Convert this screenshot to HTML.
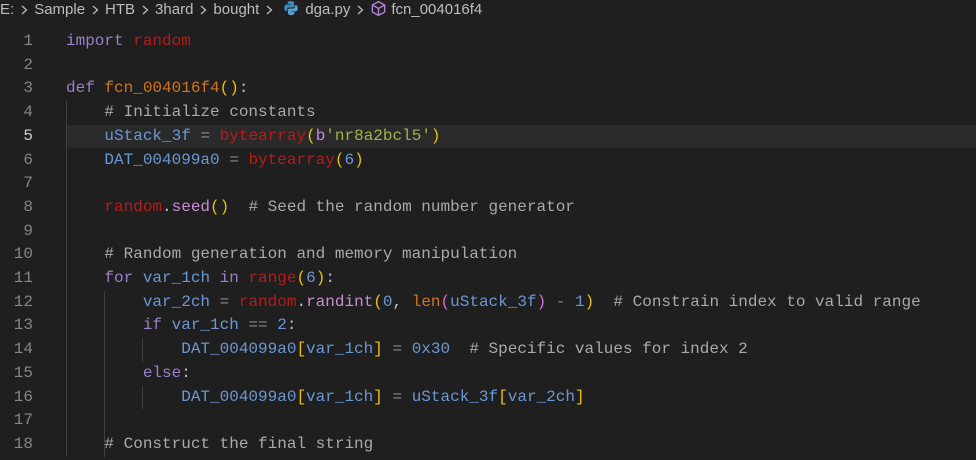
<!DOCTYPE html>
<html><head><meta charset="utf-8"><style>
html,body{margin:0;padding:0;background:#1f1f1f;width:976px;height:452px;overflow:hidden}
.bc{position:absolute;top:0;left:0;height:28px;line-height:30px;font:15px "Liberation Sans",sans-serif;color:#bdbdbd;white-space:nowrap}
.sep{display:inline-block;width:9px;height:10px;margin:0 5px 0 6px;vertical-align:-1px}
.code{position:absolute;top:30px;left:0;font:16px/23.7px "Liberation Mono",monospace;color:#c0c0c0;white-space:pre}
.ln{position:absolute;left:0;width:33px;text-align:right;color:#858585}
.ln.a{color:#cccccc}
.tx{position:absolute;left:66px}
.hl{position:absolute;left:66px;right:0;background:#2a2a2a}
.g{position:absolute;width:1px;background:#404040}
.k{color:#9b7fc8}.r{color:#b81b1b}.f{color:#d2741e}.c{color:#a9a9a9}.v{color:#6b98d4}.n{color:#6b98d4}.st{color:#9fb544}.o{color:#8a8a8a}.y{color:#e8c10a}.p{color:#d36ad6}.b{color:#c78bd6}
</style></head><body>
<div class="bc">E:<svg class="sep" viewBox="0 0 9 10"><path d="M2 1l4.5 4L2 9" fill="none" stroke="#bbb" stroke-width="1.3"/></svg>Sample<svg class="sep" viewBox="0 0 9 10"><path d="M2 1l4.5 4L2 9" fill="none" stroke="#bbb" stroke-width="1.3"/></svg>HTB<svg class="sep" viewBox="0 0 9 10"><path d="M2 1l4.5 4L2 9" fill="none" stroke="#bbb" stroke-width="1.3"/></svg>3hard<svg class="sep" viewBox="0 0 9 10"><path d="M2 1l4.5 4L2 9" fill="none" stroke="#bbb" stroke-width="1.3"/></svg>bought<svg class="sep" viewBox="0 0 9 10"><path d="M2 1l4.5 4L2 9" fill="none" stroke="#bbb" stroke-width="1.3"/></svg><svg width="16" height="16" viewBox="0 0 16 16" style="vertical-align:-2px;margin:0 6px 0 4px"><path d="M7.8 1C4.5 1 4.7 2.4 4.7 2.4V4h3.2v.5H3.4S1.3 4.3 1.3 7.7s1.8 3.3 1.8 3.3h1.1V9.4s-.1-1.9 1.9-1.9h3.2s1.8 0 1.8-1.8V2.8S11.4 1 7.8 1z" fill="#3a8cc0"/><path d="M8.2 15c3.3 0 3.1-1.4 3.1-1.4V12H8.1v-.5h4.5s2.1.2 2.1-3.2-1.8-3.3-1.8-3.3h-1.1v1.6s.1 1.9-1.9 1.9H6.7s-1.8 0-1.8 1.8v2.9S4.6 15 8.2 15z" fill="#5aa0d0"/></svg>dga.py<svg class="sep" viewBox="0 0 9 10"><path d="M2 1l4.5 4L2 9" fill="none" stroke="#bbb" stroke-width="1.3"/></svg><svg width="17" height="17" viewBox="0 0 16 16" style="vertical-align:-3px;margin-right:4px"><path d="M8 1.5l5.8 3.2v6.6L8 14.5l-5.8-3.2V4.7z M2.2 4.7L8 8l5.8-3.3 M8 8v6.5" fill="none" stroke="#b180d7" stroke-width="1.3" stroke-linejoin="round"/></svg>fcn_004016f4</div>
<div class="code" style="width:976px;height:430px">
<div class="hl" style="top:94.8px;height:23.7px"></div>
<div class="g" style="left:66px;top:71.1px;height:355px"></div>
<div class="g" style="left:104px;top:260.7px;height:166px"></div>
<div class="g" style="left:142px;top:308.1px;height:23.7px"></div>
<div class="g" style="left:142px;top:355.5px;height:23.7px"></div>
<div class="ln" style="top:0">1</div><div class="tx" style="top:0"><span class="k">import</span> <span class="r">random</span></div>
<div class="ln" style="top:23.7px">2</div>
<div class="ln" style="top:47.4px">3</div><div class="tx" style="top:47.4px"><span class="k">def</span> <span class="f">fcn_004016f4</span><span class="y">()</span>:</div>
<div class="ln" style="top:71.1px">4</div><div class="tx c" style="top:71.1px">    # Initialize constants</div>
<div class="ln a" style="top:94.8px">5</div><div class="tx" style="top:94.8px">    <span class="v">uStack_3f</span> <span class="o">=</span> <span class="r">bytearray</span><span class="y">(</span><span class="b">b</span><span class="st">'nr8a2bcl5'</span><span class="y">)</span></div>
<div class="ln" style="top:118.5px">6</div><div class="tx" style="top:118.5px">    <span class="v">DAT_004099a0</span> <span class="o">=</span> <span class="r">bytearray</span><span class="y">(</span><span class="n">6</span><span class="y">)</span></div>
<div class="ln" style="top:142.2px">7</div>
<div class="ln" style="top:165.9px">8</div><div class="tx" style="top:165.9px">    <span class="r">random</span>.<span class="b">seed</span><span class="y">()</span>  <span class="c"># Seed the random number generator</span></div>
<div class="ln" style="top:189.6px">9</div>
<div class="ln" style="top:213.3px">10</div><div class="tx c" style="top:213.3px">    # Random generation and memory manipulation</div>
<div class="ln" style="top:237px">11</div><div class="tx" style="top:237px">    <span class="k">for</span> <span class="v">var_1ch</span> <span class="k">in</span> <span class="r">range</span><span class="y">(</span><span class="n">6</span><span class="y">)</span>:</div>
<div class="ln" style="top:260.7px">12</div><div class="tx" style="top:260.7px">        <span class="v">var_2ch</span> <span class="o">=</span> <span class="r">random</span>.<span class="b">randint</span><span class="y">(</span><span class="n">0</span>, <span class="f">len</span><span class="p">(</span><span class="v">uStack_3f</span><span class="p">)</span> <span class="o">-</span> <span class="n">1</span><span class="y">)</span>  <span class="c"># Constrain index to valid range</span></div>
<div class="ln" style="top:284.4px">13</div><div class="tx" style="top:284.4px">        <span class="k">if</span> <span class="v">var_1ch</span> <span class="o">==</span> <span class="n">2</span>:</div>
<div class="ln" style="top:308.1px">14</div><div class="tx" style="top:308.1px">            <span class="v">DAT_004099a0</span><span class="y">[</span><span class="v">var_1ch</span><span class="y">]</span> <span class="o">=</span> <span class="n">0x30</span>  <span class="c"># Specific values for index 2</span></div>
<div class="ln" style="top:331.8px">15</div><div class="tx" style="top:331.8px">        <span class="k">else</span>:</div>
<div class="ln" style="top:355.5px">16</div><div class="tx" style="top:355.5px">            <span class="v">DAT_004099a0</span><span class="y">[</span><span class="v">var_1ch</span><span class="y">]</span> <span class="o">=</span> <span class="v">uStack_3f</span><span class="y">[</span><span class="v">var_2ch</span><span class="y">]</span></div>
<div class="ln" style="top:379.2px">17</div>
<div class="ln" style="top:402.9px">18</div><div class="tx c" style="top:402.9px">    # Construct the final string</div>
</div>
</body></html>
